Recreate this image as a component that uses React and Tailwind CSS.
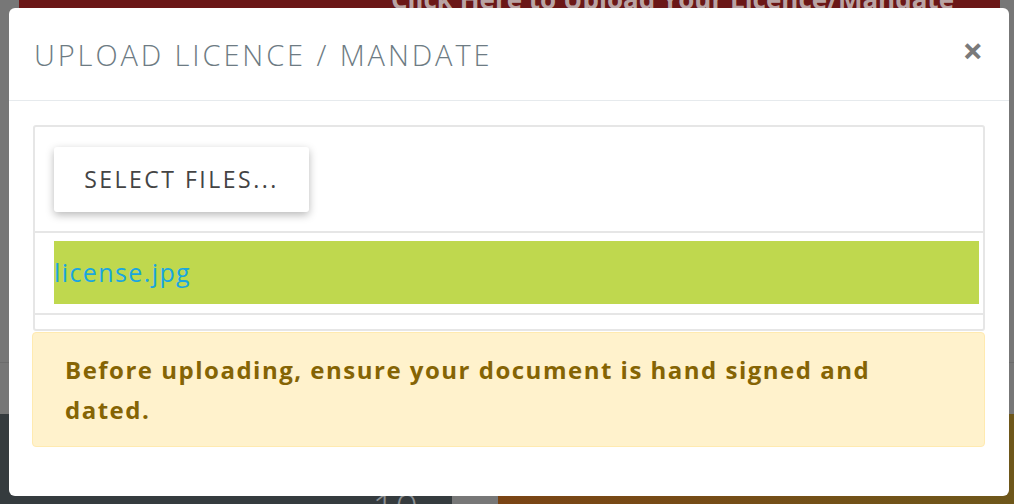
import React from "react";

export default function App() {
    return (
        <div className="relative w-[1014px] h-[504px] overflow-hidden bg-[#777777] font-['Open_Sans',sans-serif]">
            {/* page behind the overlay */}
            <div className="flex flex-col h-full">
                <div className="shrink-0 ml-[19px] mr-[14px] h-[40px] -mt-[32px] bg-[#6b1717] flex justify-end pr-[46px]">
                    <span className="block mt-[18px] text-[26px] font-bold text-[#b9a3a3] leading-[26px]">
                        Click Here to Upload Your Licence/Mandate
                    </span>
                </div>
                <div className="shrink-0 h-[354px]" />
                <div className="shrink-0 h-[1px] bg-[#6c6c6c]" />
                <div className="shrink-0 h-[51px]" />
                <div className="flex flex-1 min-h-0 overflow-hidden">
                    <div className="w-[452px] bg-[#353b3e] flex justify-end pr-[34px]">
                        <span className="text-[40px] leading-none text-[#8a8f92] font-light mt-[74px]">10</span>
                    </div>
                    <div className="w-[46px] bg-[#777777]" />
                    <div className="flex-1 bg-gradient-to-r from-[#7a4414] to-[#6e571a]" />
                </div>
            </div>

            {/* modal */}
            <div className="absolute left-[9px] top-[8px] w-[1000px] h-[488px] bg-white rounded-[6px] flex flex-col">
                <div className="h-[93px] border-b border-[#e6eaed] flex items-center justify-between pl-[25px] pr-[26px] pt-[1px]">
                    <h2 className="text-[29px] font-light tracking-[2.9px] text-[#6d7b83]">
                        UPLOAD LICENCE / MANDATE
                    </h2>
                    <button className="text-[36px] font-bold leading-none text-[#7a7a7a] -mt-[8px]">×</button>
                </div>

                <div className="pl-[24px] pr-[24px] pt-[24px]">
                    <div className="border-2 border-[#e6e6e6] rounded-[3px]">
                        <div className="h-[106px] pl-[19px] pt-[20px] border-b-2 border-[#e6e6e6]">
                            <button className="w-[255px] h-[65px] bg-white rounded-[3px] shadow-[0_3px_8px_rgba(0,0,0,0.28)] text-[23px] tracking-[2.5px] text-[#444444]">
                                SELECT FILES...
                            </button>
                        </div>
                        <div className="pl-[19px] pr-[4px] pt-[8px] pb-[9px] border-b-2 border-[#e6e6e6]">
                            <div className="h-[63px] bg-[#bfd84e] flex items-center">
                                <span className="text-[25px] tracking-[1.4px] text-[#19a6e0]">license.jpg</span>
                            </div>
                        </div>
                        <div className="h-[14px]" />
                    </div>

                    <div className="mt-[1px] ml-[-1px] h-[115px] bg-[#fff2cc] border border-[#ffeab0] rounded-[4px] pl-[32px] pr-[100px] pt-[17px]">
                        <p className="text-[24px] font-bold leading-[40px] tracking-[1.5px] text-[#856404]">
                            Before uploading, ensure your document is hand signed and dated.
                        </p>
                    </div>
                </div>
            </div>
        </div>
    );
}
